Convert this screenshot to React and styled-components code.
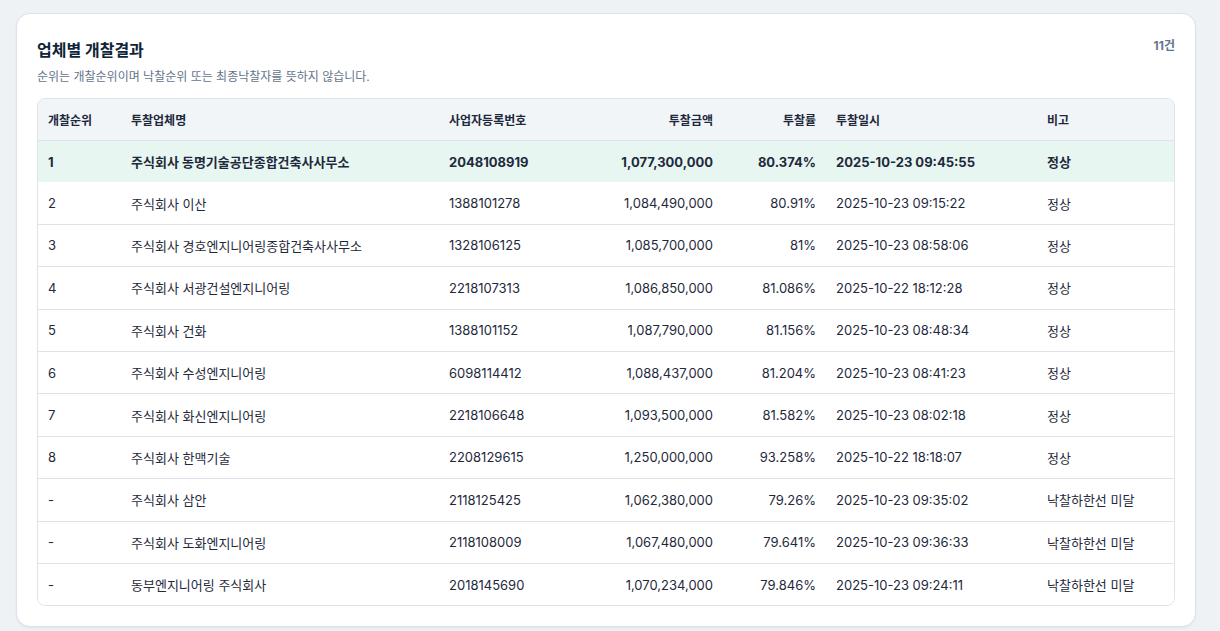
import React from "react";
import styled, { createGlobalStyle } from "styled-components";

const G = createGlobalStyle`
  body { margin:0; background:#eef2f5; font-family: Inter, "Noto Sans CJK KR", sans-serif; color:#1e293b; }
`;
const Page = styled.div`padding:13px 24px 10px 16px;`;
const Card = styled.div`
  background:#fff; border:1px solid #dde3ea; border-radius:14px;
  padding:20px 20px 20px 20px; box-shadow:0 1px 3px rgba(15,23,42,.05);
`;
const Head = styled.div`display:flex; justify-content:space-between; align-items:flex-start; margin-bottom:14px;`;
const Title = styled.h2`margin:3px 0 6px; font-size:16px; font-weight:700; color:#0f2438;`;
const Sub = styled.p`margin:0; font-size:12px; color:#64748b;`;
const Count = styled.span`font-size:12px; font-weight:700; color:#64748b; margin-top:2px;`;
const Wrap = styled.div`border:1px solid #dde3ea; border-radius:8px; overflow:hidden;`;
const Table = styled.table`width:100%; border-collapse:collapse; table-layout:fixed; font-size:13px;`;
const Th = styled.th`
  height:41px; padding:0 10px; background:#f1f5f8; font-size:12px; font-weight:700;
  text-align:${p=>p.$r?"right":"left"}; color:#1e293b; border-bottom:1px solid #dde3ea;
`;
const Tr = styled.tr`
  background:${p=>p.$hi?"#e8f6f2":"#fff"}; font-weight:${p=>p.$hi?700:400};
  & + & td { border-top:1px solid #dde3ea; }
`;
const Td = styled.td`
  height:41.4px; padding:0 10px; text-align:${p=>p.$r?"right":"left"};
  white-space:nowrap; color:#1e293b;
`;

const rows = [
  ["1","주식회사 동명기술공단종합건축사사무소","2048108919","1,077,300,000","80.374%","2025-10-23 09:45:55","정상"],
  ["2","주식회사 이산","1388101278","1,084,490,000","80.91%","2025-10-23 09:15:22","정상"],
  ["3","주식회사 경호엔지니어링종합건축사사무소","1328106125","1,085,700,000","81%","2025-10-23 08:58:06","정상"],
  ["4","주식회사 서광건설엔지니어링","2218107313","1,086,850,000","81.086%","2025-10-22 18:12:28","정상"],
  ["5","주식회사 건화","1388101152","1,087,790,000","81.156%","2025-10-23 08:48:34","정상"],
  ["6","주식회사 수성엔지니어링","6098114412","1,088,437,000","81.204%","2025-10-23 08:41:23","정상"],
  ["7","주식회사 화신엔지니어링","2218106648","1,093,500,000","81.582%","2025-10-23 08:02:18","정상"],
  ["8","주식회사 한맥기술","2208129615","1,250,000,000","93.258%","2025-10-22 18:18:07","정상"],
  ["-","주식회사 삼안","2118125425","1,062,380,000","79.26%","2025-10-23 09:35:02","낙찰하한선 미달"],
  ["-","주식회사 도화엔지니어링","2118108009","1,067,480,000","79.641%","2025-10-23 09:36:33","낙찰하한선 미달"],
  ["-","동부엔지니어링 주식회사","2018145690","1,070,234,000","79.846%","2025-10-23 09:24:11","낙찰하한선 미달"],
];
const cols = [{h:"개찰순위",w:83},{h:"투찰업체명",w:318},{h:"사업자등록번호",w:142},{h:"투찰금액",w:142,r:1},{h:"투찰률",w:103,r:1},{h:"투찰일시",w:211},{h:"비고"}];

export default function App(){
  return (<Page><G/><Card>
    <Head><div><Title>업체별 개찰결과</Title><Sub>순위는 개찰순위이며 낙찰순위 또는 최종낙찰자를 뜻하지 않습니다.</Sub></div><Count>11건</Count></Head>
    <Wrap><Table>
      <colgroup>{cols.map((c,i)=><col key={i} style={c.w?{width:c.w}:undefined}/>)}</colgroup>
      <thead><tr>{cols.map((c,i)=><Th key={i} $r={c.r}>{c.h}</Th>)}</tr></thead>
      <tbody>{rows.map((r,i)=><Tr key={i} $hi={i===0}>{r.map((v,j)=><Td key={j} $r={cols[j].r}>{v}</Td>)}</Tr>)}</tbody>
    </Table></Wrap>
  </Card></Page>);
}
